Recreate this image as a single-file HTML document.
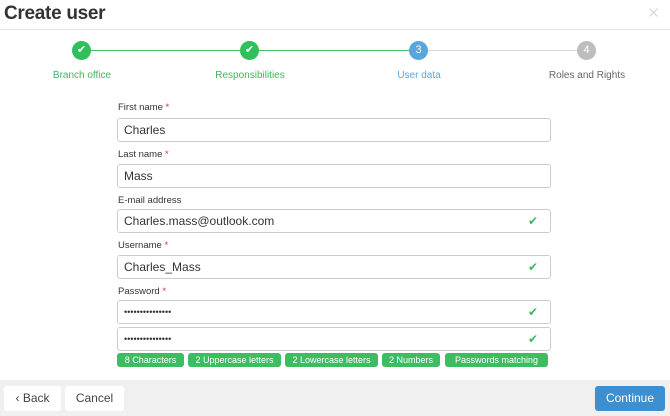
<!DOCTYPE html>
<html><head><meta charset="utf-8"><style>
*{box-sizing:border-box;margin:0;padding:0}
body{width:670px;height:416px;background:#fff;font-family:"Liberation Sans",sans-serif;position:relative;overflow:hidden;color:#333}
.abs{position:absolute}
h1{position:absolute;left:4px;top:3px;font-size:19px;font-weight:bold;color:#333;letter-spacing:-0.3px}
.sep{left:0;top:29px;width:670px;height:1px;background:#e3e3e3}
.circ{width:19px;height:19px;border-radius:50%;top:41px;color:#fff;font-size:11px;text-align:center;line-height:19px}
.lbl{top:70px;font-size:10px;text-align:center;width:120px}
.fl{left:118px;font-size:9.5px;color:#333}
.fl b{color:#d33;font-weight:normal}
.in{left:117px;width:434px;height:24px;border:1px solid #ccc;border-radius:3px;font-size:12px;padding-left:6px;line-height:22px;color:#333}
.ck{position:absolute;right:12px;top:0;color:#3cb95e;font-size:12px}
.bd{top:353px;height:14px;background:#3dbd62;color:#fff;font-size:9px;line-height:14px;border-radius:3px;text-align:center}
.foot{left:0;top:380px;width:670px;height:36px;background:#f0f0f0}
.btn{top:386px;height:25px;background:#fff;border-radius:3px;font-size:12px;line-height:25px;text-align:center;color:#444}
</style></head><body>
<h1>Create user</h1>
<div class="abs" style="right:10px;top:4px;font-size:15px;color:#ddd">✕</div>
<div class="abs sep"></div>
<div class="abs" style="left:82px;top:50px;width:337px;height:1px;background:#45c36b"></div>
<div class="abs" style="left:419px;top:50px;width:168px;height:1px;background:#d6d6d6"></div>
<div class="abs circ" style="left:72px;background:#2fbf5b">✔</div>
<div class="abs circ" style="left:240px;background:#2fbf5b">✔</div>
<div class="abs circ" style="left:409px;background:#5aa6dc">3</div>
<div class="abs circ" style="left:577px;background:#bdbdbd">4</div>
<div class="abs lbl" style="left:22px;color:#3cb95e">Branch office</div>
<div class="abs lbl" style="left:190px;color:#3cb95e">Responsibilities</div>
<div class="abs lbl" style="left:359px;color:#5aa6dc">User data</div>
<div class="abs lbl" style="left:527px;color:#666">Roles and Rights</div>

<div class="abs fl" style="top:102px">First name <b>*</b></div>
<div class="abs in" style="top:118px">Charles</div>
<div class="abs fl" style="top:149px">Last name <b>*</b></div>
<div class="abs in" style="top:164px">Mass</div>
<div class="abs fl" style="top:195px">E-mail address</div>
<div class="abs in" style="top:209px">Charles.mass@outlook.com<span class="ck">✔</span></div>
<div class="abs fl" style="top:240px">Username <b>*</b></div>
<div class="abs in" style="top:255px">Charles_Mass<span class="ck">✔</span></div>
<div class="abs fl" style="top:286px">Password <b>*</b></div>
<div class="abs in" style="top:300px;font-size:9px">•••••••••••••••<span class="ck" style="font-size:12px">✔</span></div>
<div class="abs in" style="top:327px;font-size:9px">•••••••••••••••<span class="ck" style="font-size:12px">✔</span></div>

<div class="abs bd" style="left:117px;width:67px">8 Characters</div>
<div class="abs bd" style="left:188px;width:93px">2 Uppercase letters</div>
<div class="abs bd" style="left:285px;width:93px">2 Lowercase letters</div>
<div class="abs bd" style="left:382px;width:58px">2 Numbers</div>
<div class="abs bd" style="left:445px;width:103px">Passwords matching</div>

<div class="abs foot"></div>
<div class="abs btn" style="left:4px;width:57px">‹ Back</div>
<div class="abs btn" style="left:65px;width:59px">Cancel</div>
<div class="abs btn" style="left:595px;width:70px;background:#3d8fcf;color:#fff">Continue</div>
</body></html>
